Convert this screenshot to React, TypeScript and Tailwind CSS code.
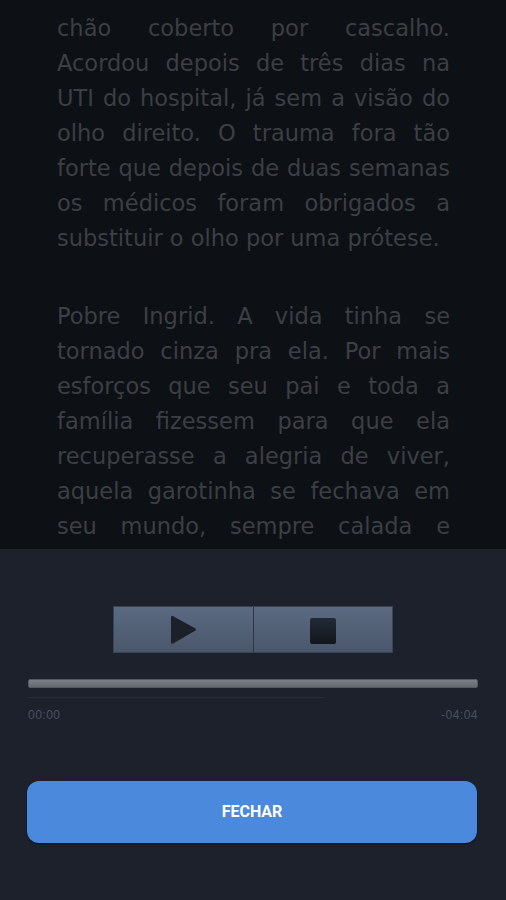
const para1 = [
  'chão coberto por cascalho.',
  'Acordou depois de três dias na',
  'UTI do hospital, já sem a visão do',
  'olho direito. O trauma fora tão',
  'forte que depois de duas semanas',
  'os médicos foram obrigados a',
  'substituir o olho por uma prótese.',
];

const para2 = [
  'Pobre Ingrid. A vida tinha se',
  'tornado cinza pra ela. Por mais',
  'esforços que seu pai e toda a',
  'família fizessem para que ela',
  'recuperasse a alegria de viver,',
  'aquela garotinha se fechava em',
  'seu mundo, sempre calada e',
];

function Paragraph({ lines, open }: { lines: string[]; open?: boolean }) {
  return (
    <div className="mb-[43px]">
      {lines.map((line, i) => {
        const last = i === lines.length - 1 && !open;
        return (
          <div
            key={i}
            className={
              last
                ? 'text-left whitespace-nowrap'
                : 'text-justify [text-align-last:justify] whitespace-nowrap'
            }
          >
            {line}
          </div>
        );
      })}
    </div>
  );
}

export default function App() {
  return (
    <div className="h-[900px] w-[506px] flex flex-col overflow-hidden bg-[#0d1014]">
      <div
        className="h-[549px] shrink-0 overflow-hidden pl-[57px] pr-[56px] pt-[11px] text-[22.5px] leading-[35px] text-[#3c3f44]"
        style={{ fontFamily: '"DejaVu Sans", Verdana, sans-serif' }}
      >
        <Paragraph lines={para1} />
        <Paragraph lines={para2} open />
      </div>

      <div className="flex-1 bg-[#1c212c] flex flex-col">
        <div className="mt-[57px] flex justify-center">
          <div className="flex h-[47px] w-[280px] border border-[#3a4352] bg-gradient-to-b from-[#5b6a81] to-[#4a576b]">
            <button className="flex-1 flex items-center justify-center border-r border-[#2e3642]">
              <svg width="30" height="32" viewBox="0 0 30 32">
                <path
                  d="M3 3.5 Q3 1 5.2 2.2 L27 14.3 Q29 15.6 27 16.8 L5.2 29.4 Q3 30.6 3 28.2 Z"
                  fill="#1b2029"
                />
              </svg>
            </button>
            <button className="flex-1 flex items-center justify-center">
              <div className="mt-[3px] h-[26px] w-[26px] rounded-[2px] bg-gradient-to-b from-[#232a36] to-[#12161d]" />
            </button>
          </div>
        </div>

        <div className="mt-[26px] px-[28px]">
          <div className="h-[9px] rounded-[2px] bg-gradient-to-b from-[#7a7f88] to-[#646972] border border-[#555a63]" />
          <div className="mt-[9px] h-px w-[296px] bg-[#272d39]" />
          <div
            className="mt-[8px] flex justify-between text-[12px] tracking-[0.5px] text-[#4b5160]"
            style={{ fontFamily: '"Liberation Sans", Arial, sans-serif' }}
          >
            <span>00:00</span>
            <span>-04:04</span>
          </div>
        </div>

        <div className="mt-[57px] pl-[27px] pr-[29px]">
          <button
            className="h-[62px] w-full rounded-[12px] bg-[#4a89dc] text-white font-bold text-[16px] shadow-[0_1px_2px_rgba(0,0,0,0.5)]"
            style={{ fontFamily: 'Roboto, "Liberation Sans", sans-serif' }}
          >
            FECHAR
          </button>
        </div>
      </div>
    </div>
  );
}
